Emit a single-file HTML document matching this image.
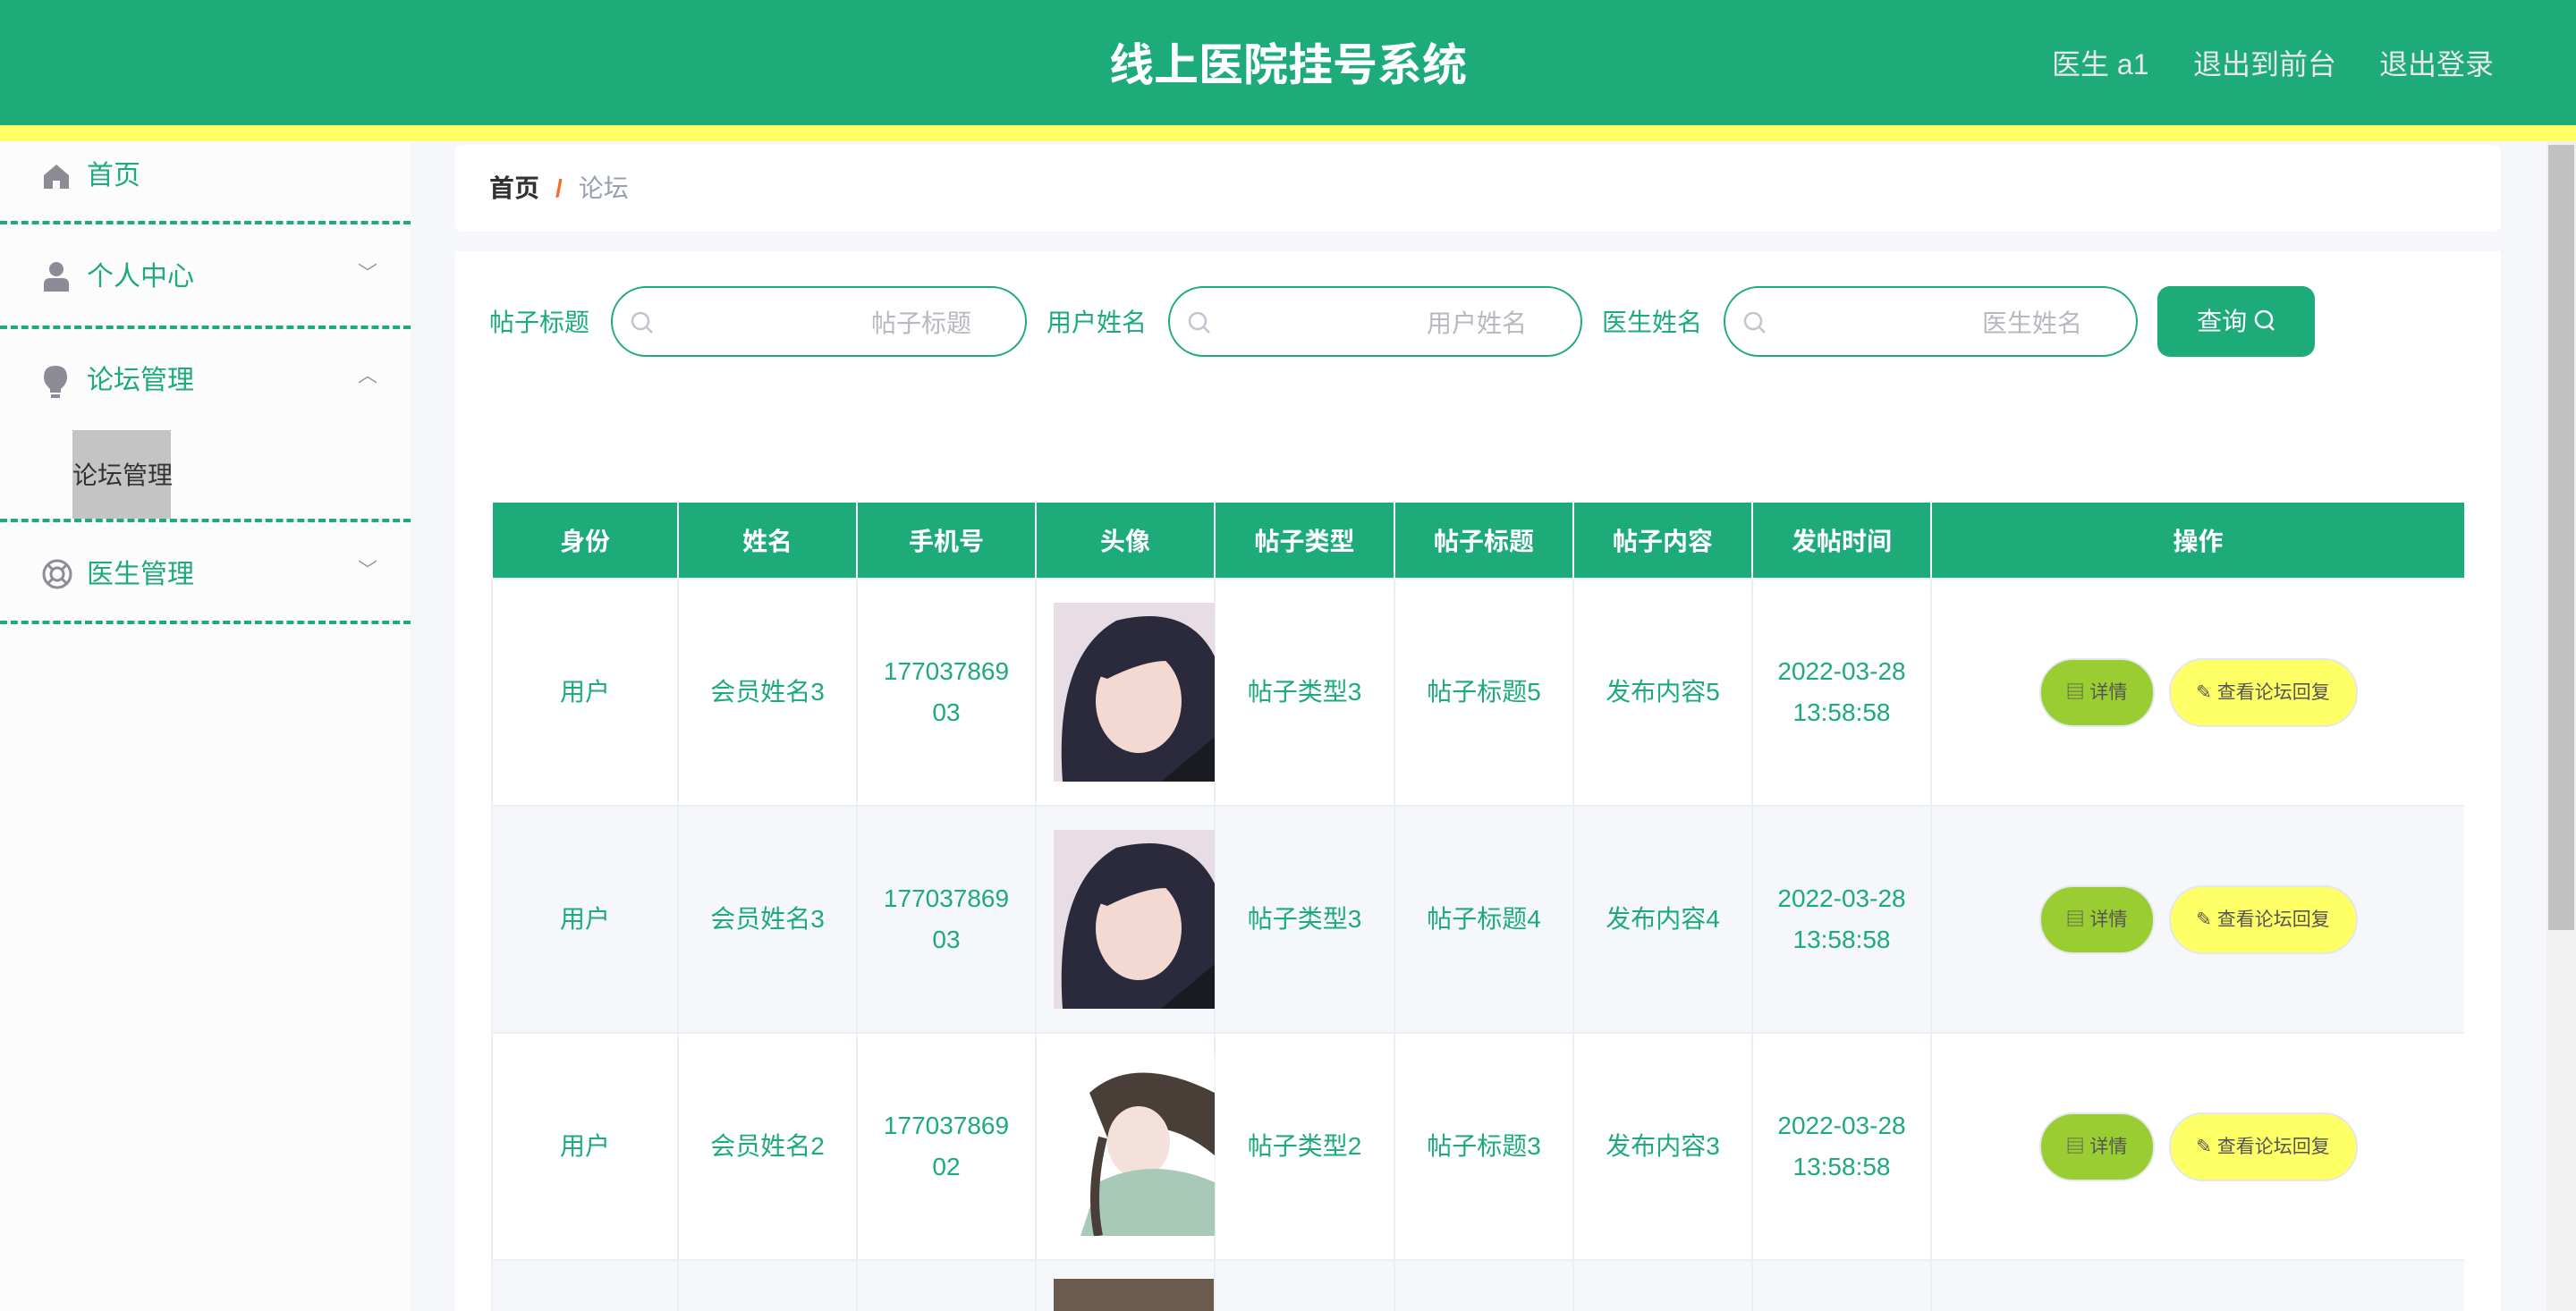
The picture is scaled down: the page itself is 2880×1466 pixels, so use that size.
<!DOCTYPE html>
<html style="width:2880px;height:1466px;overflow:hidden"><head><meta charset="utf-8"><style>
*{margin:0;padding:0;box-sizing:border-box}
body{width:2880px;height:1466px;overflow:hidden;background:#f5f7fa;font-family:"Liberation Sans","Noto Sans CJK SC",sans-serif;position:relative}
.abs{position:absolute}
.hdr{left:0;top:0;width:2880px;height:140px;background:#1dab7a}
.yb{left:0;top:140px;width:2880px;height:18px;background:#ffff66}
.title{left:0;width:2880px;top:40px;text-align:center;color:#fff;font-size:50px;font-weight:bold;line-height:66px}
.hl{top:48px;color:#e8e8e8;font-size:32px;line-height:48px}
.side{left:0;top:158px;width:459px;height:1308px;background:#fcfcfc}
.mi{left:97px;color:#1dab7a;font-size:30px;line-height:40px}
.dash{left:0;width:459px;height:0;border-top:4px dashed #1dab7a}
.arr{left:400px;color:#999;font-size:22px}
.card{background:#fff;border-radius:8px}
.lbl{color:#1dab7a;font-size:28px;line-height:40px;top:341px}
.inp{top:320px;height:79px;border:2px solid #1dab7a;border-radius:40px;background:#fff}
.ph{color:#b8b8c0;font-size:28px;position:absolute;right:60px;top:18px}
.tw{position:absolute;left:549px;top:562px;width:2206px;height:904px;overflow:hidden}
table{border-collapse:collapse;table-layout:fixed;width:2206px}
th{background:#1dab7a;color:#fff;font-size:28px;font-weight:bold;height:85px;border:2px solid #fff;border-top:0;border-bottom:0}
td{color:#1dab7a;font-size:28px;line-height:46px;text-align:center;height:254px;border:2px solid #ebeef5;background:#fff}
tr.alt td{background:#f5f7fa}
.b1{display:inline-block;width:129px;height:77px;border-radius:38px;background:#9acd32;border:2px solid #e4e7ed;color:#555;font-size:21px;line-height:73px;vertical-align:middle}
.b2{display:inline-block;width:211px;height:77px;border-radius:38px;background:#ffff66;border:2px solid #e4e7ed;color:#555;font-size:21px;line-height:73px;margin-left:16px;vertical-align:middle}
</style></head><body>
<div class="abs hdr"></div>
<div class="abs title">线上医院挂号系统</div>
<div class="abs hl" style="left:2294px">医生 a1</div>
<div class="abs hl" style="left:2452px">退出到前台</div>
<div class="abs hl" style="left:2660px">退出登录</div>
<div class="abs yb"></div>

<div class="abs side"></div>
<svg class="abs" style="left:48px;top:183px" width="30" height="28" viewBox="0 0 30 28"><path d="M15 1 L29 13 V28 H19 V19 H11 V28 H1 V13 Z" fill="#8c8c96"/></svg>
<div class="abs mi" style="top:177px">首页</div>
<div class="abs dash" style="top:247px"></div>
<svg class="abs" style="left:48px;top:292px" width="30" height="34" viewBox="0 0 30 34"><circle cx="15" cy="9" r="8" fill="#8c8c96"/><path d="M1 34 V26 Q1 19 8 19 H22 Q29 19 29 26 V34 Z" fill="#8c8c96"/></svg>
<div class="abs mi" style="top:290px">个人中心</div>
<div class="abs arr" style="top:288px">﹀</div>
<div class="abs dash" style="top:364px"></div>
<svg class="abs" style="left:48px;top:408px" width="28" height="38" viewBox="0 0 28 38"><path d="M14 1 Q27 1 27 14 Q27 21 20 27 V31 H8 V27 Q1 21 1 14 Q1 1 14 1Z" fill="#8c8c96"/><rect x="9" y="33" width="10" height="4" fill="#8c8c96"/></svg>
<div class="abs mi" style="top:406px">论坛管理</div>
<div class="abs arr" style="top:402px">︿</div>
<div class="abs" style="left:81px;top:481px;width:110px;height:99px;background:#c4c4c4"></div>
<div class="abs" style="left:81px;top:512px;color:#333;font-size:28px;line-height:40px">论坛管理</div>
<div class="abs dash" style="top:580px"></div>
<svg class="abs" style="left:47px;top:625px" width="34" height="34" viewBox="0 0 34 34"><circle cx="17" cy="17" r="15" fill="none" stroke="#8c8c96" stroke-width="3"/><circle cx="17" cy="17" r="7" fill="none" stroke="#8c8c96" stroke-width="3"/><path d="M7 7 L12 12 M27 7 L22 12 M7 27 L12 22 M27 27 L22 22" stroke="#8c8c96" stroke-width="3"/></svg>
<div class="abs mi" style="top:623px">医生管理</div>
<div class="abs arr" style="top:620px">﹀</div>
<div class="abs dash" style="top:694px"></div>

<div class="abs card" style="left:509px;top:162px;width:2287px;height:97px"></div>
<div class="abs" style="left:547px;top:191px;font-size:28px;line-height:40px"><b style="color:#303133">首页</b><span style="color:#f56c2c;margin:0 18px;font-weight:bold">/</span><span style="color:#97a0b3">论坛</span></div>

<div class="abs" style="left:509px;top:281px;width:2287px;height:1185px;background:#fff"></div>
<div class="abs lbl" style="left:547px">帖子标题</div>
<div class="abs inp" style="left:683px;width:465px"><svg class="abs" style="left:20px;top:26px" width="26" height="26" viewBox="0 0 26 26"><circle cx="11" cy="11" r="9" fill="none" stroke="#c0c4cc" stroke-width="2.5"/><path d="M18 18 L24 24" stroke="#c0c4cc" stroke-width="2.5"/></svg><span class="ph">帖子标题</span></div>
<div class="abs lbl" style="left:1170px">用户姓名</div>
<div class="abs inp" style="left:1306px;width:463px"><svg class="abs" style="left:20px;top:26px" width="26" height="26" viewBox="0 0 26 26"><circle cx="11" cy="11" r="9" fill="none" stroke="#c0c4cc" stroke-width="2.5"/><path d="M18 18 L24 24" stroke="#c0c4cc" stroke-width="2.5"/></svg><span class="ph">用户姓名</span></div>
<div class="abs lbl" style="left:1791px">医生姓名</div>
<div class="abs inp" style="left:1927px;width:463px"><svg class="abs" style="left:20px;top:26px" width="26" height="26" viewBox="0 0 26 26"><circle cx="11" cy="11" r="9" fill="none" stroke="#c0c4cc" stroke-width="2.5"/><path d="M18 18 L24 24" stroke="#c0c4cc" stroke-width="2.5"/></svg><span class="ph">医生姓名</span></div>
<div class="abs" style="left:2412px;top:320px;width:176px;height:79px;background:#1dab7a;border-radius:14px;color:#fff;font-size:28px;line-height:79px;text-align:center">查询 <svg width="24" height="26" viewBox="0 0 24 26" style="vertical-align:-3px"><circle cx="11" cy="11" r="9" fill="none" stroke="#fff" stroke-width="2.5"/><path d="M17 18 L22 23" stroke="#fff" stroke-width="2.5"/></svg></div>

<div class="tw"><table>
<colgroup><col style="width:208px"><col style="width:200px"><col style="width:200px"><col style="width:200px"><col style="width:201px"><col style="width:200px"><col style="width:200px"><col style="width:200px"><col style="width:597px"></colgroup>
<tr><th>身份</th><th>姓名</th><th>手机号</th><th>头像</th><th>帖子类型</th><th>帖子标题</th><th>帖子内容</th><th>发帖时间</th><th>操作</th></tr>
<tr><td>用户</td><td>会员姓名3</td><td>177037869<br>03</td><td style="padding:0"><svg width="180" height="200" viewBox="0 0 180 200" style="display:block;margin-left:19px"><rect width="180" height="200" fill="#e8dde4"/><path d="M10 200 Q0 60 70 20 Q150 0 180 60 V200Z" fill="#2a2a3c"/><ellipse cx="95" cy="110" rx="48" ry="58" fill="#f3d9d2"/><path d="M45 80 Q90 20 150 70 Q120 55 60 85Z" fill="#2a2a3c"/><path d="M120 200 L180 150 V200Z" fill="#1a1a22"/></svg></td><td>帖子类型3</td><td>帖子标题5</td><td>发布内容5</td><td>2022-03-28<br>13:58:58</td><td><span class="b1">▤ 详情</span><span class="b2">✎ 查看论坛回复</span></td></tr>
<tr class="alt"><td>用户</td><td>会员姓名3</td><td>177037869<br>03</td><td style="padding:0"><svg width="180" height="200" viewBox="0 0 180 200" style="display:block;margin-left:19px"><rect width="180" height="200" fill="#e8dde4"/><path d="M10 200 Q0 60 70 20 Q150 0 180 60 V200Z" fill="#2a2a3c"/><ellipse cx="95" cy="110" rx="48" ry="58" fill="#f3d9d2"/><path d="M45 80 Q90 20 150 70 Q120 55 60 85Z" fill="#2a2a3c"/><path d="M120 200 L180 150 V200Z" fill="#1a1a22"/></svg></td><td>帖子类型3</td><td>帖子标题4</td><td>发布内容4</td><td>2022-03-28<br>13:58:58</td><td><span class="b1">▤ 详情</span><span class="b2">✎ 查看论坛回复</span></td></tr>
<tr><td>用户</td><td>会员姓名2</td><td>177037869<br>02</td><td style="padding:0"><svg width="180" height="200" viewBox="0 0 180 200" style="display:block;margin-left:19px"><rect width="180" height="200" fill="#fff"/><path d="M40 40 Q90 -5 180 40 V110 Q120 60 60 90 Z" fill="#4a3f38"/><ellipse cx="95" cy="95" rx="35" ry="40" fill="#f4e1dc"/><path d="M30 200 L50 140 Q110 110 180 140 V200Z" fill="#a9c9b8"/><path d="M55 90 Q40 150 50 200" stroke="#4a3f38" stroke-width="10" fill="none"/></svg></td><td>帖子类型2</td><td>帖子标题3</td><td>发布内容3</td><td>2022-03-28<br>13:58:58</td><td><span class="b1">▤ 详情</span><span class="b2">✎ 查看论坛回复</span></td></tr>
<tr class="alt"><td></td><td></td><td></td><td style="padding:0;vertical-align:top"><div style="margin:20px 0 0 19px;width:180px;height:200px;background:#6b5a4e"></div></td><td></td><td></td><td></td><td></td><td></td></tr>
</table></div>

<div class="abs" style="left:2847px;top:158px;width:33px;height:1308px;background:#f1f1f1"></div>
<div class="abs" style="left:2849px;top:162px;width:29px;height:878px;background:#c1c1c1"></div>
</body></html>
